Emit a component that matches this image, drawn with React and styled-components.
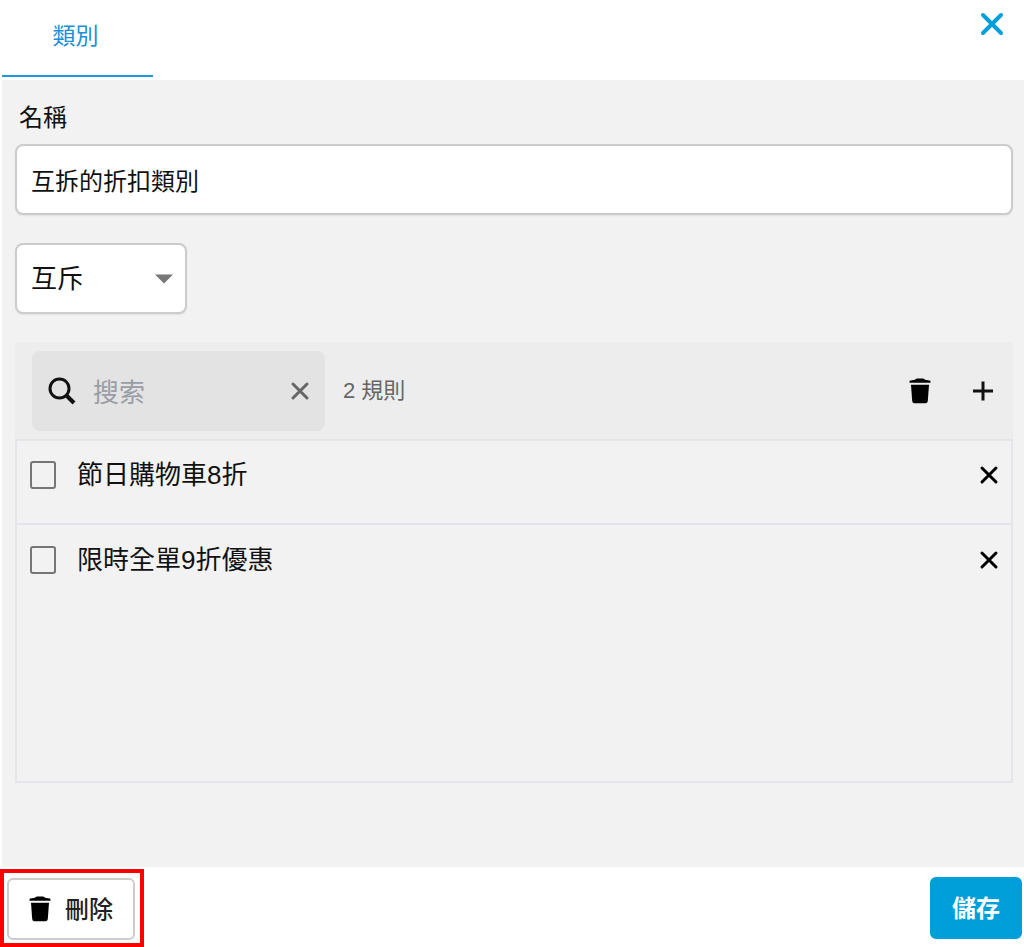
import React from 'react';
import styled, { createGlobalStyle } from 'styled-components';

const GlobalStyle = createGlobalStyle`
    *, *::before, *::after {
        box-sizing: border-box;
    }

    body {
        margin: 0;
        background: #fff;
    }

    body, button, input, select {
        font-family: "Liberation Sans", "Noto Sans CJK TC", sans-serif;
        color: #111;
    }
`;

//LAYOUT
const Dialog = styled.form`
    display: flex;
    flex-direction: column;
    min-height: 100vh;
`;

const Header = styled.header`
    display: flex;
    justify-content: space-between;
    align-items: flex-start;
    height: 80px;
    padding: 0 20px 0 2px;
`;

const Tab = styled.a`
    height: 77px;
    width: 151px;
    padding: 18px 4px 0 0;
    border-bottom: 2px solid #1a9ad8;

    color: #1a90d8;
    font-size: 23px;
    line-height: 36px;
    text-align: center;
    text-decoration: none;
`;

const Body = styled.main`
    flex: 1;
    display: flex;
    flex-direction: column;
    margin-left: 2px;
    padding: 20px 11px 84px 13px;
    background: #f2f2f2;
`;

const Footer = styled.footer`
    display: flex;
    justify-content: space-between;
    align-items: center;
    height: 80px;
    padding: 2px 2px 0 0;
`;

//FIELDS
const Label = styled.label`
    padding-left: 4px;
    font-size: 24px;
    line-height: 36px;
`;

const TextInput = styled.input`
    width: 100%;
    height: 71px;
    margin: 8px 0 28px;
    padding: 0 14px;
    border: 2px solid #ccc;
    border-radius: 8px;
    background: #fff;
    box-shadow: 0 1px 2px #0001;
    font-size: 24px;
`;

const SelectContainer = styled.div`
    display: grid;
    align-items: center;
    width: 172px;
    margin-bottom: 28px;

    > * {
        grid-area: 1 / 1;
    }

    > svg {
        justify-self: end;
        margin-right: 14px;
        pointer-events: none;
    }
`;

const Select = styled.select`
    appearance: none;
    width: 100%;
    height: 71px;
    padding: 0 14px;
    border: 2px solid #ccc;
    border-radius: 8px;
    background: #fff;
    box-shadow: 0 1px 2px #0001;
    font-size: 26px;
`;

//RULES
const RulesPanel = styled.section`
    flex: 1;
    display: flex;
    flex-direction: column;
`;

const Toolbar = styled.div`
    display: flex;
    align-items: center;
    height: 97px;
    padding: 0 19px 0 17px;
    background: #ededed;
`;

const SearchBox = styled.div`
    display: flex;
    align-items: center;
    width: 293px;
    height: 80px;
    padding: 0 15px 0 16px;
    border-radius: 8px;
    background: #e3e3e3;
`;

const SearchInput = styled.input`
    flex: 1;
    min-width: 0;
    padding: 6px 0 0 17px;
    border: none;
    background: transparent;
    font-size: 26px;
    outline: none;

    &::placeholder {
        color: #9a9da6;
        opacity: 1;
    }
`;

const Count = styled.span`
    flex: 1;
    padding: 0 0 6px 18px;
    color: #666;
    font-size: 22px;
`;

const IconButton = styled.button`
    display: flex;
    margin-left: ${props => props.$gap || 0}px;
    padding: 0;
    border: none;
    background: none;
    color: ${props => props.$color || '#000'};
    cursor: pointer;
`;

const CloseButton = styled(IconButton)`
    margin-top: 12px;
`;

const RuleList = styled.ul`
    flex: 1;
    margin: 0;
    padding: 0;
    border: 2px solid #e4e5ea;
    list-style: none;
`;

const Rule = styled.li`
    display: flex;
    align-items: center;
    height: 84px;
    padding: 0 12px 14px 13px;
    border-bottom: 2px solid #e4e5ea;

    &:last-child {
        border-bottom: none;
    }
`;

const Checkbox = styled.input`
    appearance: none;
    width: 26px;
    height: 28px;
    margin: 0;
    border: 2px solid #767676;
    border-radius: 3px;

    &:checked {
        background: #009fda;
    }
`;

const RuleName = styled.label`
    flex: 1;
    padding: 0 0 6px 21px;
    font-size: 26px;
`;

//BUTTONS
const Highlight = styled.div`
    padding: 5px 5px 3px 3px;
    border: 4px solid #f00;
`;

const Button = styled.button`
    display: flex;
    align-items: center;
    justify-content: center;
    gap: 14px;
    height: 62px;
    padding: 0 20px;
    border: 2px solid ${props => props.$primary ? '#009fda' : '#ccc'};
    border-radius: 6px;
    background: ${props => props.$primary ? '#009fda' : '#fff'};
    color: ${props => props.$primary ? '#fff' : '#222'};
    font-size: 24px;
    font-weight: ${props => props.$primary ? 700 : 500};
    cursor: pointer;
`;

const ButtonText = styled.span`
    padding-bottom: 4px;
`;

//ICONS
const CrossIcon = ({ size, stroke }) => (
    <svg width={size} height={size} viewBox={`0 0 ${size} ${size}`} stroke="currentColor" strokeWidth={stroke} strokeLinecap="round">
        <path d={`M3 3L${size - 3} ${size - 3}M${size - 3} 3L3 ${size - 3}`} />
    </svg>
);

const TrashIcon = () => (
    <svg width="22" height="26" viewBox="0 0 22 26" fill="#000">
        <path d="M0.5 4.8V3.4Q0.5 2.6 1.5 2.4L6 1.7Q7 0.6 8.5 0.6H13.5Q15 0.6 16 1.7L20.5 2.4Q21.5 2.6 21.5 3.4V4.8Z" />
        <path d="M2 6.8H20L18.8 23Q18.6 25.2 16.4 25.2H5.6Q3.4 25.2 3.2 23Z" />
    </svg>
);

const PlusIcon = () => (
    <svg width="22" height="20" viewBox="0 0 22 20" stroke="#111" strokeWidth="3">
        <path d="M1 10H21M11 0.5V19.5" />
    </svg>
);

const SearchIcon = () => (
    <svg width="28" height="28" viewBox="0 0 28 28" fill="none" stroke="#111" strokeWidth="3">
        <circle cx="11.5" cy="11.5" r="9.5" />
        <path d="M18 18L26 26" strokeWidth="4" />
    </svg>
);

const CaretIcon = () => (
    <svg width="18" height="10" viewBox="0 0 18 10" fill="#777">
        <path d="M0 0.5H18L9 9.5Z" />
    </svg>
);

const rules = [
    { id: 'rule-1', name: '節日購物車8折' },
    { id: 'rule-2', name: '限時全單9折優惠' },
];

const App = () => {
    return (
        <Dialog onSubmit={e => e.preventDefault()}>
            <GlobalStyle />
            <Header>
                <Tab href="#category">類別</Tab>
                <CloseButton type="button" aria-label="關閉" $color="#009fda">
                    <CrossIcon size={24} stroke={4} />
                </CloseButton>
            </Header>
            <Body id="category">
                <Label htmlFor="name">名稱</Label>
                <TextInput id="name" type="text" defaultValue="互拆的折扣類別" />
                <SelectContainer>
                    <Select aria-label="類型" defaultValue="exclusive">
                        <option value="exclusive">互斥</option>
                    </Select>
                    <CaretIcon />
                </SelectContainer>
                <RulesPanel>
                    <Toolbar>
                        <SearchBox>
                            <SearchIcon />
                            <SearchInput type="text" placeholder="搜索" aria-label="搜索" />
                            <IconButton type="button" aria-label="清除" $color="#666">
                                <CrossIcon size={20} stroke={3} />
                            </IconButton>
                        </SearchBox>
                        <Count>2 規則</Count>
                        <IconButton type="button" aria-label="刪除">
                            <TrashIcon />
                        </IconButton>
                        <IconButton type="button" aria-label="新增" $gap={41}>
                            <PlusIcon />
                        </IconButton>
                    </Toolbar>
                    <RuleList>
                        {rules.map(rule => (
                            <Rule key={rule.id}>
                                <Checkbox id={rule.id} type="checkbox" />
                                <RuleName htmlFor={rule.id}>{rule.name}</RuleName>
                                <IconButton type="button" aria-label="移除">
                                    <CrossIcon size={20} stroke={3} />
                                </IconButton>
                            </Rule>
                        ))}
                    </RuleList>
                </RulesPanel>
            </Body>
            <Footer>
                <Highlight>
                    <Button type="button">
                        <TrashIcon />
                        <ButtonText>刪除</ButtonText>
                    </Button>
                </Highlight>
                <Button type="submit" $primary>
                    <ButtonText>儲存</ButtonText>
                </Button>
            </Footer>
        </Dialog>
    );
};

export default App;
